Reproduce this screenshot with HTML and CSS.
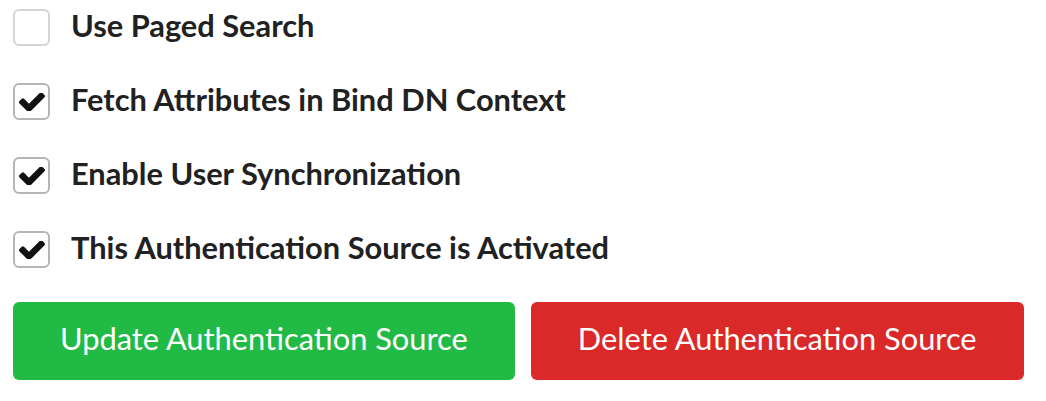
FILE: index.html
```html
<!DOCTYPE html>
<html>
<head>
<meta charset="utf-8">
<link rel="stylesheet" href="styles.css">
</head>
<body>
<div class="form">
  <div class="field">
    <span class="box"></span>
    <span class="label">Use Paged Search</span>
  </div>
  <div class="field">
    <span class="box checked"><svg viewBox="121 402 1550 1024" class="tick"><path d="M1671 566q0 40-28 68l-724 724-136 136q-28 28-68 28t-68-28l-136-136-362-362q-28-28-28-68t28-68l136-136q28-28 68-28t68 28l294 295 656-657q28-28 68-28t68 28l136 136q28 28 28 68z"/></svg></span>
    <span class="label">Fetch Attributes in Bind DN Context</span>
  </div>
  <div class="field">
    <span class="box checked"><svg viewBox="121 402 1550 1024" class="tick"><path d="M1671 566q0 40-28 68l-724 724-136 136q-28 28-68 28t-68-28l-136-136-362-362q-28-28-28-68t28-68l136-136q28-28 68-28t68 28l294 295 656-657q28-28 68-28t68 28l136 136q28 28 28 68z"/></svg></span>
    <span class="label">Enable User Synchronization</span>
  </div>
  <div class="field">
    <span class="box checked"><svg viewBox="121 402 1550 1024" class="tick"><path d="M1671 566q0 40-28 68l-724 724-136 136q-28 28-68 28t-68-28l-136-136-362-362q-28-28-28-68t28-68l136-136q28-28 68-28t68 28l294 295 656-657q28-28 68-28t68 28l136 136q28 28 28 68z"/></svg></span>
    <span class="label">This Authentication Source is Activated</span>
  </div>
  <div class="actions">
    <button class="btn green">Update Authentication Source</button>
    <button class="btn red">Delete Authentication Source</button>
  </div>
</div>
</body>
</html>
```
FILE: styles.css
```css
html, body {
  margin: 0;
  padding: 0;
  background: #ffffff;
}
body {
  font-family: Lato, "Liberation Sans", sans-serif;
  color: #212121;
}
.form {
  padding: 9px 0 0 13px;
  display: flex;
  flex-direction: column;
}
.field {
  display: flex;
  align-items: center;
  height: 37px;
  margin-bottom: 37px;
}
.field:nth-child(4) {
  margin-bottom: 34px;
}
.box {
  box-sizing: border-box;
  width: 37px;
  height: 37px;
  border: 2px solid #d4d4d5;
  border-radius: 6px;
  display: flex;
  align-items: center;
  justify-content: center;
  flex: none;
}
.box.checked {
  border-color: #b5b5b5;
}
.tick {
  width: 26px;
  height: 18px;
  fill: #111111;
}
.label {
  margin-left: 21px;
  margin-bottom: 4px;
  font-size: 30.8px;
  font-weight: 700;
  line-height: 37px;
  white-space: nowrap;
}
.actions {
  display: flex;
  gap: 16px;
}
.btn {
  box-sizing: border-box;
  font-family: Lato, "Liberation Sans", sans-serif;
  font-size: 30.8px;
  font-weight: 400;
  color: #ffffff;
  border: none;
  border-radius: 6px;
  height: 78px;
  padding: 0 47px 5px;
  margin: 0;
  cursor: pointer;
  white-space: nowrap;
}
.btn.green {
  background: #21ba45;
}
.btn.red {
  background: #db2828;
}
```
